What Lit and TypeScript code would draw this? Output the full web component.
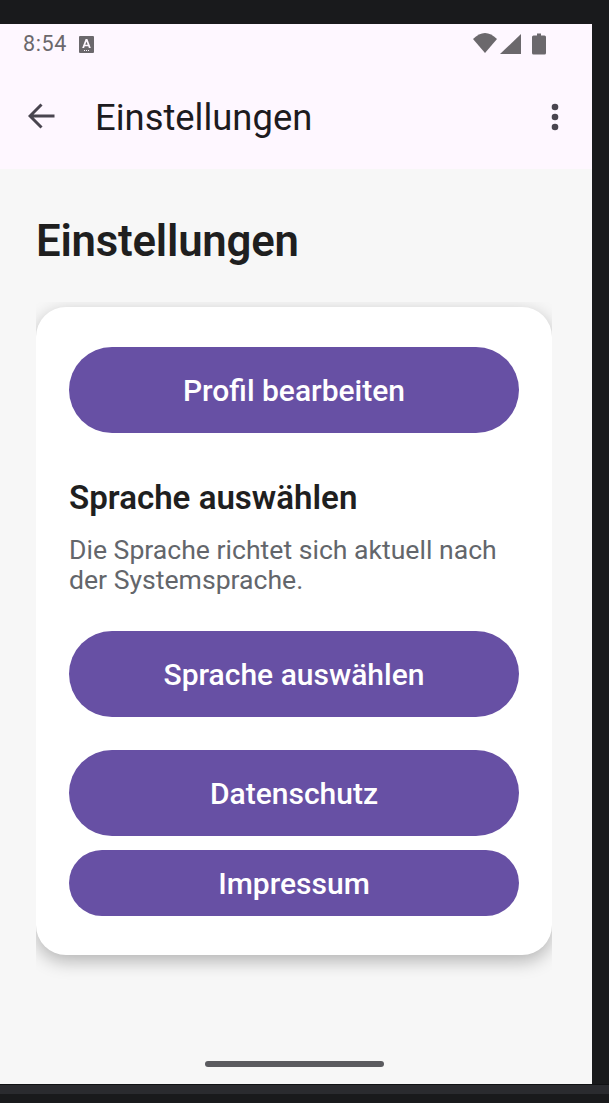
import { LitElement, html, css } from "lit";
import { customElement } from "lit/decorators.js";

@customElement("app-root")
export class AppRoot extends LitElement {
  static styles = css`
    :host {
      display: block;
      width: 609px;
      height: 1103px;
      background: #191a1c;
      font-family: Roboto, sans-serif;
      overflow: hidden;
    }
    .top-gap {
      height: 24px;
    }
    .device {
      width: 592px;
      height: 1060px;
      background: #f7f7f7;
      overflow: hidden;
    }
    .app-bar {
      height: 145px;
      background: #fef7ff;
      box-sizing: border-box;
    }
    .status {
      height: 40px;
      display: flex;
      align-items: center;
      padding: 0 46px 0 23px;
      color: #6b686c;
    }
    .time {
      font-size: 21.5px;
      letter-spacing: 0.6px;
      width: 56px;
      margin-top: -1px;
    }
    .status svg {
      display: block;
      fill: #6b686c;
    }
    .spacer {
      flex: 1;
    }
    .bar {
      height: 66px;
      margin-top: 20px;
      display: flex;
      align-items: center;
      padding-left: 28px;
      padding-right: 33px;
    }
    .bar .back {
      margin-top: -2px;
    }
    .bar .title {
      font-size: 36.4px;
      color: #1d1b20;
      margin-left: 40px;
      margin-top: 1px;
      flex: 1;
    }
    .content {
      padding: 0 40px 0 36px;
    }
    h1 {
      margin: 47px 0 41px;
      font-size: 43.7px;
      line-height: 50px;
      font-weight: 650;
      color: #1f1f1f;
      letter-spacing: -0.2px;
    }
    .card {
      height: 648px;
      box-sizing: border-box;
      padding: 40px 33px 0;
      background: #fff;
      border-radius: 30px;
      box-shadow: 0 6px 18px rgba(0, 0, 0, 0.28);
      clip-path: inset(-5px 0 -30px 0);
    }
    .btn {
      display: flex;
      align-items: center;
      justify-content: center;
      height: 86px;
      border-radius: 43px;
      background: #6750a4;
      color: #fff;
      font-size: 30px;
      font-weight: 500;
    }
    .btn.small {
      height: 66px;
      border-radius: 33px;
      margin-top: 14px;
    }
    h2 {
      margin: 48px 0 0;
      font-size: 33.1px;
      line-height: 34px;
      font-weight: 650;
      color: #1f1f1f;
    }
    p {
      margin: 20px 0 0;
      font-size: 26.6px;
      line-height: 30px;
      color: #63666b;
    }
    .gap-a {
      margin-top: 36px;
    }
    .gap-b {
      margin-top: 33px;
    }
    .nav-pill {
      width: 179px;
      height: 6px;
      border-radius: 3px;
      background: #5b5b5f;
    }
    .device-wrap {
      position: relative;
    }
    .nav-pill-place {
      position: absolute;
      left: 205px;
      top: 1037px;
    }
    .frame-line {
      height: 1px;
      background: #111214;
    }
    .frame-strip {
      height: 9px;
      background: #2a2b2f;
    }
  `;

  render() {
    return html`
      <div class="top-gap"></div>
      <div class="device-wrap">
        <div class="device">
          <div class="app-bar">
            <div class="status">
              <span class="time">8:54</span>
              <svg width="15" height="17" viewBox="0 0 15 17">
                <path
                  fill-rule="evenodd"
                  d="M1 0h13a1 1 0 0 1 1 1v15a1 1 0 0 1-1 1H1a1 1 0 0 1-1-1V1a1 1 0 0 1 1-1zM6.600 3 3.200 12h1.900l.6-1.800h3.600l.6 1.800h1.900L8.400 3zm.9 2.400 1.200 3.300H6.300zM5 14v1h1v-1zm2 0v1h1v-1zm2 0v1h1v-1z"
                />
              </svg>
              <span class="spacer"></span>
              <svg width="73" height="22" viewBox="0 0 73 22">
                <path d="M0 6Q12-6 24 6L12 20z" />
                <path d="M48 1v20H27z" />
                <path
                  d="M59 4a1.500 1.500 0 0 1 1.500-1.500H64V.500h4v2h3.500A1.500 1.500 0 0 1 73 4v16a1.500 1.500 0 0 1-1.500 1.500h-11A1.500 1.500 0 0 1 59 20z"
                />
              </svg>
            </div>
            <div class="bar">
              <svg class="back" width="27" height="26" viewBox="0 0 27 26">
                <path
                  d="M26.500 13H2M13.500 1.500 2 13l11.500 11.500"
                  fill="none"
                  stroke="#49454f"
                  stroke-width="3"
                />
              </svg>
              <span class="title">Einstellungen</span>
              <svg width="8" height="28" viewBox="0 0 8 28">
                <circle cx="4" cy="4" r="3.300" fill="#49454f" />
                <circle cx="4" cy="14" r="3.300" fill="#49454f" />
                <circle cx="4" cy="24" r="3.300" fill="#49454f" />
              </svg>
            </div>
          </div>
          <div class="content">
            <h1>Einstellungen</h1>
            <div class="card">
              <div class="btn">Profil bearbeiten</div>
              <h2>Sprache auswählen</h2>
              <p>Die Sprache richtet sich aktuell nach der Systemsprache.</p>
              <div class="btn gap-a">Sprache auswählen</div>
              <div class="btn gap-b">Datenschutz</div>
              <div class="btn small">Impressum</div>
            </div>
          </div>
        </div>
        <div class="nav-pill-place"><div class="nav-pill"></div></div>
      </div>
      <div class="frame-line"></div>
      <div class="frame-strip"></div>
    `;
  }
}
